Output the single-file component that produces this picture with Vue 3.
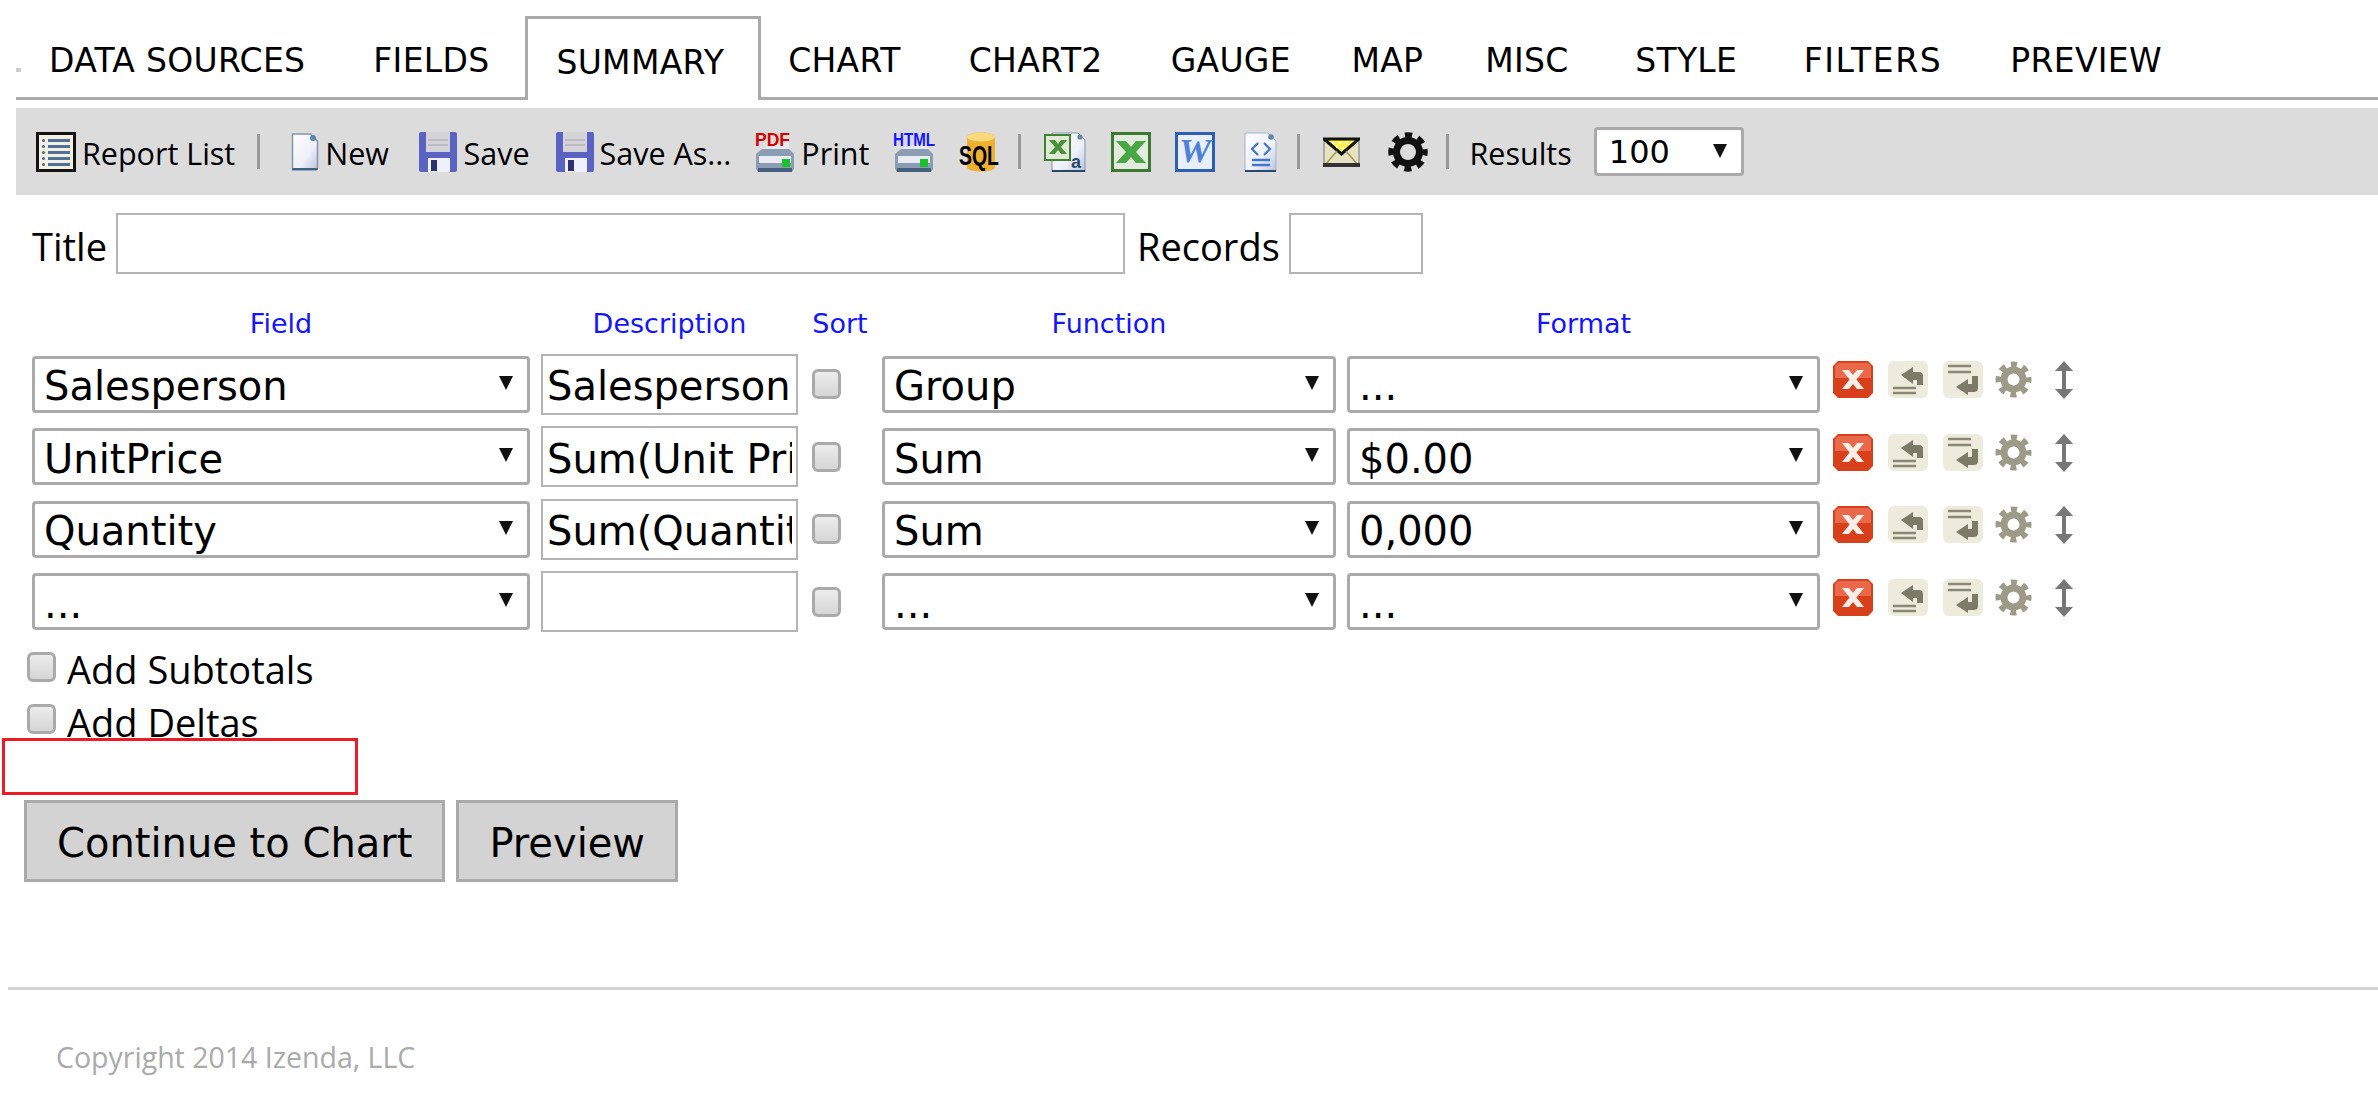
<template>
  <div class="page">
    <div class="tabs">
      <i class="tab-dot"></i>
      <a v-for="t in tabs" :key="t" class="tab" :class="['tab-' + t.toLowerCase().replace(' ', '-'), { active: t === 'SUMMARY' }]">{{ t }}</a>
    </div>

    <div class="toolbar">
      <span class="tool tool-list">
        <svg width="40" height="40" viewBox="0 0 40 40">
          <rect x="1.5" y="1.5" width="37" height="37" fill="#f4f1e2" stroke="#111" stroke-width="3" />
          <g fill="#4f7199">
            <rect x="12" y="7" width="22" height="3" /><rect x="12" y="13" width="22" height="3" />
            <rect x="12" y="19" width="22" height="3" /><rect x="12" y="25" width="22" height="3" />
            <rect x="12" y="31" width="22" height="3" />
            <circle cx="7.5" cy="8.5" r="1.6" /><circle cx="7.5" cy="14.5" r="1.6" /><circle cx="7.5" cy="20.5" r="1.6" />
            <circle cx="7.5" cy="26.5" r="1.6" /><circle cx="7.5" cy="32.5" r="1.6" />
          </g>
        </svg>
        Report List
      </span>
      <i class="sep"></i>
      <span class="tool tool-new">
        <svg width="28" height="38" viewBox="0 0 28 38">
          <defs>
            <linearGradient id="paper" x1="0" y1="0" x2="1" y2="1">
              <stop offset="0" stop-color="#ffffff" /><stop offset="0.6" stop-color="#eef0fa" /><stop offset="1" stop-color="#b9c4da" />
            </linearGradient>
          </defs>
          <path d="M1.5 1h18l7 7v27a2 2 0 0 1-2 2h-23z" fill="url(#paper)" stroke="#7f97ad" stroke-width="1.5" />
          <circle cx="22" cy="5" r="3" fill="#5f87a8" />
          <path d="M1.5 36h25" stroke="#3f6280" stroke-width="2" />
        </svg>
        New
      </span>
      <span class="tool" :class="s === 'Save' ? 'tool-save' : 'tool-saveas'" v-for="s in ['Save', 'Save As...']" :key="s">
        <svg width="38" height="40" viewBox="0 0 38 40">
          <path d="M2 0h34a2 2 0 0 1 2 2v36a2 2 0 0 1-2 2H2a2 2 0 0 1-2-2V2a2 2 0 0 1 2-2z" fill="#5a62c2" />
          <rect x="7" y="0" width="24" height="20" fill="#d3d3d8" />
          <rect x="9" y="7" width="20" height="2" fill="#bcbcc4" />
          <rect x="9" y="12" width="20" height="2" fill="#bcbcc4" />
          <rect x="9" y="26" width="22" height="14" fill="#eef0fa" />
          <rect x="12" y="28" width="6" height="11" fill="#2c3270" />
        </svg>
        {{ s }}
      </span>
      <span class="tool tool-print">
        <svg width="40" height="40" viewBox="0 0 40 40">
          <path d="M8 16l26-6v10H8z" fill="#e6e9ee" />
          <path d="M1 22l6-5h27l5 5v15l-2 3H3l-2-3z" fill="#8b9db2" />
          <rect x="4" y="24" width="32" height="7" fill="#e8ecf2" />
          <rect x="27" y="27" width="8" height="8" fill="#19c22a" />
          <rect x="3" y="36" width="34" height="4" fill="#44607c" />
          <text x="0" y="14" class="ico-text pdf" textLength="35" lengthAdjust="spacingAndGlyphs">PDF</text>
        </svg>
        Print
      </span>
      <span class="tool">
        <svg width="42" height="40" viewBox="0 0 42 40">
          <path d="M9 16l26-6v10H9z" fill="#e6e9ee" />
          <path d="M2 22l6-5h27l5 5v15l-2 3H4l-2-3z" fill="#8b9db2" />
          <rect x="5" y="24" width="32" height="7" fill="#e8ecf2" />
          <rect x="27" y="27" width="8" height="8" fill="#19c22a" />
          <rect x="4" y="36" width="34" height="4" fill="#44607c" />
          <text x="0" y="14" class="ico-text html" textLength="42" lengthAdjust="spacingAndGlyphs">HTML</text>
        </svg>
      </span>
      <span class="tool">
        <svg width="40" height="40" viewBox="0 0 40 40">
          <path d="M8 5c0-6 28-6 28 0v30c0 6-28 6-28 0z" fill="#eeb02f" />
          <ellipse cx="22" cy="5" rx="14" ry="4.5" fill="#f8d97c" />
          <text x="0" y="33" class="ico-text sql" textLength="40" lengthAdjust="spacingAndGlyphs">SQL</text>
        </svg>
      </span>
      <i class="sep sep-tight"></i>
      <span class="tool">
        <svg width="42" height="40" viewBox="0 0 42 40">
          <path d="M8 1h26l7 7v32H8z" fill="url(#paper)" stroke="#7f97ad" stroke-width="1" />
          <path d="M8 39h33" stroke="#27496b" stroke-width="2" />
          <circle cx="36" cy="5" r="2.6" fill="#5f87a8" />
          <rect x="1" y="3" width="25" height="25" fill="#dfe9d6" stroke="#3f8231" stroke-width="2" />
          <path d="M5 8h6l3 4 3-4h6l-6 7 6 7h-6l-3-4-3 4H5l6-7z" fill="#49913a" />
          <text x="27" y="36" class="ico-text doc-a">a</text>
        </svg>
      </span>
      <span class="tool">
        <svg width="40" height="40" viewBox="0 0 40 40">
          <rect x="1.5" y="1.5" width="37" height="37" fill="#e3ecdc" stroke="#3c7a33" stroke-width="3" />
          <path d="M5 9h10l5 6 5-6h10l-10 11 10 11H25l-5-6-5 6H5l10-11z" fill="#49a644" />
        </svg>
      </span>
      <span class="tool">
        <svg width="40" height="40" viewBox="0 0 40 40">
          <rect x="1.5" y="1.5" width="37" height="37" fill="#e8eefa" stroke="#2d5fb3" stroke-width="3" />
          <text x="20" y="30" class="ico-text word" textLength="32" lengthAdjust="spacingAndGlyphs">W</text>
        </svg>
      </span>
      <span class="tool tool-xml">
        <svg width="33" height="40" viewBox="0 0 33 40">
          <path d="M1 1h23l8 8v30H1z" fill="url(#paper)" stroke="#9fb4cc" stroke-width="1" />
          <path d="M1 39h31" stroke="#27496b" stroke-width="2" />
          <circle cx="27" cy="5" r="2.8" fill="#5f87a8" />
          <path d="M14 11l-6 6 6 6M20 11l6 6-6 6" fill="none" stroke="#3f76c7" stroke-width="2.2" />
          <path d="M8 28h18M8 33h18" stroke="#3f76c7" stroke-width="2.4" />
        </svg>
      </span>
      <i class="sep sep-tight"></i>
      <span class="tool tool-mail">
        <svg width="37" height="30" viewBox="0 0 37 30">
          <rect x="1" y="2" width="35" height="26" fill="#e6e2c2" stroke="#777" stroke-width="1" />
          <path d="M1 2l17.500 15 17.500-15z" fill="#fff34a" stroke="#111" stroke-width="3" />
          <g fill="#fff">
            <circle cx="10" cy="6" r="1.200" /><circle cx="17" cy="6" r="1.200" /><circle cx="24" cy="6" r="1.200" /><circle cx="20" cy="11" r="1.200" /><circle cx="14" cy="10" r="1.200" />
          </g>
          <path d="M2 28l12-14M35 28L23 14" stroke="#a39a4a" stroke-width="1.5" />
          <rect x="0" y="26" width="37" height="4" fill="#333" />
        </svg>
      </span>
      <span class="tool tool-gear">
        <svg width="40" height="40" viewBox="0 0 40 40">
          <circle cx="20" cy="20" r="11.500" fill="none" stroke="#111" stroke-width="7" />
          <circle cx="20" cy="20" r="16.500" fill="none" stroke="#111" stroke-width="6.500" stroke-dasharray="7 5.960" stroke-dashoffset="3.500" />
        </svg>
      </span>
      <i class="sep sep-tight sep-last"></i>
      <span class="tool tool-results">Results</span>
      <span class="sel sel-results">
        <select><option>100</option></select>
        <i class="arrow"></i>
      </span>
    </div>

    <div class="title-row">
      <label>Title</label>
      <input class="txt title-input" type="text" />
      <label class="rec-label">Records</label>
      <input class="txt rec-input" type="text" />
    </div>

    <div class="fields">
      <div class="head">Field</div>
      <div class="head">Description</div>
      <div class="head">Sort</div>
      <div class="head">Function</div>
      <div class="head">Format</div>
      <div></div>
      <template v-for="r in rows" :key="r.field">
        <span class="sel"><select><option>{{ r.field }}</option></select><i class="arrow"></i></span>
        <input class="txt desc" type="text" :value="r.desc" />
        <input class="cb" type="checkbox" />
        <span class="sel"><select><option>{{ r.func }}</option></select><i class="arrow"></i></span>
        <span class="sel"><select><option>{{ r.format }}</option></select><i class="arrow"></i></span>
        <div class="row-icons">
          <svg width="40" height="37" viewBox="0 0 40 37">
            <path d="M5 0h30l5 5v27l-5 5H5l-5-5V5z" fill="#d8401c" />
            <path d="M5 2h30l3 3v12H2V5z" fill="#e9694a" />
            <path d="M9 9h7l4 5 4-5h7l-7.500 9.500L31 28h-7l-4-5-4 5H9l7.500-9.500z" fill="#fbeee8" />
          </svg>
          <svg width="40" height="37" viewBox="0 0 40 37">
            <rect width="40" height="37" rx="6" fill="#eeebdd" />
            <path d="M13 14l12-8v5h6a4 4 0 0 1 4 4v9h-6v-5h-4v4z" fill="#7d7a68" />
            <path d="M5 27h23M5 32h23" stroke="#8a8774" stroke-width="2.500" />
          </svg>
          <svg width="40" height="37" viewBox="0 0 40 37">
            <rect width="40" height="37" rx="6" fill="#eeebdd" />
            <path d="M5 5h23M5 11h23" stroke="#8a8774" stroke-width="2.500" />
            <path d="M13 26l12-8v5h4v-8h6v12a4 4 0 0 1-4 4h-6v3z" fill="#7d7a68" />
          </svg>
          <svg class="ico-gear" width="37" height="37" viewBox="0 0 37 37">
            <circle cx="18.500" cy="18.500" r="9.500" fill="none" stroke="#9d9a88" stroke-width="7" />
            <circle cx="18.500" cy="18.500" r="15" fill="none" stroke="#9d9a88" stroke-width="6" stroke-dasharray="6 5.780" stroke-dashoffset="3" />
          </svg>
          <svg class="ico-move" width="18" height="38" viewBox="0 0 18 38">
            <path d="M9 0l9 10H11v18h7L9 38 0 28h7V10H0z" fill="#777" />
          </svg>
        </div>
      </template>
    </div>

    <div class="checks">
      <label class="check"><input class="cb" type="checkbox" /> Add Subtotals</label>
      <label class="check check-last"><input class="cb" type="checkbox" /> Add Deltas</label>
    </div>
    <div class="error-box"></div>

    <div class="buttons">
      <button>Continue to Chart</button>
      <button>Preview</button>
    </div>

    <hr class="rule" />
    <div class="copyright">Copyright 2014 Izenda, LLC</div>
  </div>
</template>

<script setup>
const tabs = ['DATA SOURCES', 'FIELDS', 'SUMMARY', 'CHART', 'CHART2', 'GAUGE', 'MAP', 'MISC', 'STYLE', 'FILTERS', 'PREVIEW'];

const rows = [
  { field: 'Salesperson', desc: 'Salesperson', func: 'Group', format: '...' },
  { field: 'UnitPrice', desc: 'Sum(Unit Price)', func: 'Sum', format: '$0.00' },
  { field: 'Quantity', desc: 'Sum(Quantity)', func: 'Sum', format: '0,000' },
  { field: '...', desc: '', func: '...', format: '...' },
];
</script>

<style>
html, body {
  margin: 0;
  background: #fff;
  overflow: hidden;
}
</style>

<style scoped>
.page {
  font-family: "Open Sans", sans-serif;
  color: #000;
  width: 2378px;
}

.tabs {
  display: flex;
  margin-left: 16px;
  padding-top: 16px;
  height: 81px;
  border-bottom: 3px solid #aaa;
}

.tab-dot {
  width: 5px;
  height: 4px;
  background: #ccc;
  align-self: flex-start;
  margin: 52px 0 0 0;
}

.tab {
  font-family: "DejaVu Sans", sans-serif;
  font-size: 33px;
  letter-spacing: 0.300px;
  padding: 22px 34px 0;
  line-height: 46px;
  white-space: nowrap;
}

.tab:first-of-type {
  padding-left: 28px;
}

.tab-map { margin-left: -7.500px; }
.tab-misc { margin-left: -6px; }
.tab-style { margin-left: -1.500px; }

.tab-filters {
  margin-left: -1.500px;
  letter-spacing: 1.600px;
}

.tab.active {
  position: relative;
  box-sizing: border-box;
  height: 84px;
  margin: 0 -7px 0 2px;
  padding: 21px 34px 0 28px;
  border: 3px solid #aaa;
  border-bottom: 0;
  background: #fff;
}

/* the line under the open tab stops 10px before its right edge */
.tab.active::after {
  content: "";
  position: absolute;
  left: 0;
  right: 7px;
  bottom: -3px;
  height: 3px;
  background: #fff;
}

.toolbar {
  display: flex;
  align-items: center;
  margin: 8px 0 0 16px;
  height: 87px;
  padding-left: 20px;
  background: #dcdcdc;
  font-size: 30.500px;
}

.tool {
  display: flex;
  align-items: center;
  gap: 6px;
  margin-right: 24.500px;
  padding-top: 3px;
  white-space: nowrap;
  line-height: 44px;
}

.tool svg {
  margin-top: -3px;
}

.tool-list { margin-right: 26px; }
.tool-new { margin-right: 30.500px; }
.tool-save { margin-right: 26px; }
.tool-saveas { margin-right: 24px; }
.tool-print { margin-right: 23.500px; }
.tool-mail { margin-right: 27.500px; }
.tool-results { margin-right: 22px; }

.tool-xml {
  margin-left: 4.500px;
  margin-right: 25.500px;
}

.sep {
  width: 3px;
  height: 35px;
  background: #999;
  margin-right: 31px;
  margin-left: -4px;
}

.sep-tight {
  margin-right: 23.500px;
  margin-left: -6px;
}

.sep-last {
  margin-right: 20px;
}

.sel {
  position: relative;
  display: block;
  height: 57px;
}

.sel select {
  appearance: none;
  box-sizing: border-box;
  width: 100%;
  height: 100%;
  border: 3px solid #aaa;
  border-radius: 4px;
  background: #fff;
  padding: 4px 0 0 9px;
  font-family: "DejaVu Sans", sans-serif;
  font-size: 40px;
  color: #000;
}

.arrow {
  position: absolute;
  right: 17px;
  top: 20px;
  border-left: 7.500px solid transparent;
  border-right: 7.500px solid transparent;
  border-top: 14px solid #111;
  pointer-events: none;
}

.sel-results {
  width: 150px;
  height: 49px;
}

.sel-results select {
  font-size: 32px;
  padding: 0 0 0 12px;
}

.sel-results .arrow {
  top: 17px;
}

.title-row {
  display: flex;
  align-items: center;
  margin: 18px 0 0 32px;
  font-size: 38px;
}

.title-row label {
  padding-top: 5px;
}

.txt {
  box-sizing: border-box;
  height: 61px;
  border: 2px solid #b4b4b4;
  background: #fff;
  padding: 0 4px;
  margin: 0;
  outline: none;
}

.title-input {
  width: 1009px;
  margin-left: 9px;
}

.title-row .rec-label {
  margin-left: 12px;
}

.rec-input {
  width: 134px;
  margin-left: 9px;
}

.fields {
  display: grid;
  grid-template-columns: 498px 257px 62px 454px 473px auto;
  column-gap: 11px;
  row-gap: 11.600px;
  align-items: center;
  margin: 34px 0 0 32px;
}

.head {
  font-family: "DejaVu Sans", sans-serif;
  font-size: 27px;
  line-height: 32px;
  margin-bottom: 2px;
  text-align: center;
  color: #1414ff;
}

.desc {
  width: 100%;
  font-family: "DejaVu Sans", sans-serif;
  font-size: 40px;
  padding: 4px 4px 0;
  color: #000;
}

.cb {
  appearance: none;
  box-sizing: border-box;
  width: 29px;
  height: 30px;
  margin: 0 0 0 3px;
  border: 3px solid #aaa;
  border-radius: 6px;
  background: linear-gradient(#ececec, #d6d6d6);
}

.row-icons {
  display: flex;
  align-items: flex-start;
  gap: 15px;
  margin: -8px 0 0 2px;
}

.ico-gear {
  margin-left: -3px;
}

.ico-move {
  margin-left: 8px;
}

.checks {
  margin: 11px 0 0 24px;
  font-size: 38px;
}

.check {
  display: flex;
  align-items: flex-start;
  gap: 11px;
  height: 52px;
  line-height: 52px;
}

.check .cb {
  margin-top: 9px;
}

.check-last {
  height: 43px;
  line-height: 54px;
}

.error-box {
  position: relative;
  box-sizing: border-box;
  width: 356px;
  height: 57px;
  margin-left: 2px;
  border: 3px solid #ed1c24;
  background: #fff;
}

.buttons {
  display: flex;
  gap: 11px;
  margin: 5px 0 0 24px;
}

.buttons button {
  box-sizing: border-box;
  height: 82px;
  padding: 4px 30px 0;
  border: 3px solid #aaa;
  background: #d3d3d3;
  font-family: "DejaVu Sans", sans-serif;
  font-size: 40px;
  color: #000;
}

.rule {
  margin: 105px 0 0 8px;
  height: 3px;
  border: 0;
  background: #d3d3d3;
}

.copyright {
  margin: 48px 0 0 56px;
  font-size: 28.500px;
  color: #aaa;
}

.ico-text {
  font-family: "Liberation Sans", sans-serif;
  font-weight: 700;
}

.pdf {
  font-size: 18px;
  fill: #d40000;
}

.html {
  font-size: 19px;
  fill: #1616ff;
}

.sql {
  font-size: 27px;
  fill: #000;
}

.doc-a {
  font-size: 18px;
  fill: #27496b;
}

.word {
  font-family: "Liberation Serif", serif;
  font-size: 34px;
  font-style: italic;
  fill: #4f82d6;
  text-anchor: middle;
}
</style>
